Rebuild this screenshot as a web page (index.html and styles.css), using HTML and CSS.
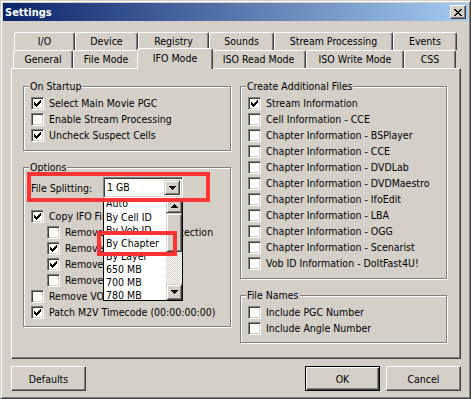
FILE: index.html
```html
<!DOCTYPE html>
<html>
<head>
<meta charset="utf-8">
<title>Settings</title>
<link rel="stylesheet" href="styles.css">
</head>
<body>
<div class="window">
  <div class="titlebar">
    <span class="title">Settings</span>
    <span class="close"><svg width="8" height="7" viewBox="0 0 8 7" shape-rendering="crispEdges"><path d="M0 0h2v1H0z M6 0h2v1H6z M1 1h2v1H1z M5 1h2v1H5z M2 2h4v1H2z M3 3h2v1H3z M2 4h4v1H2z M1 5h2v1H1z M5 5h2v1H5z M0 6h2v1H0z M6 6h2v1H6z" fill="#000"/></svg></span>
  </div>
  <div class="client">
    <div class="tabs">
      <div class="tabrow back">
        <div class="tab">I/O</div>
        <div class="tab">Device</div>
        <div class="tab">Registry</div>
        <div class="tab">Sounds</div>
        <div class="tab">Stream Processing</div>
        <div class="tab">Events</div>
      </div>
      <div class="tabrow front">
        <div class="tab">General</div>
        <div class="tab">File Mode</div>
        <div class="tab sel">IFO Mode</div>
        <div class="tab">ISO Read Mode</div>
        <div class="tab">ISO Write Mode</div>
        <div class="tab">CSS</div>
      </div>
    </div>
    <div class="panel">
      <div class="col">
        <div class="group">
          <span class="group-title">On Startup</span>
          <div class="cb-row"><span class="cb on"><svg width="7" height="7" viewBox="0 0 7 7" shape-rendering="crispEdges"><path d="M6 0h1v1H6z M5 1h2v1H5z M0 2h1v1H0z M4 2h3v1H4z M0 3h2v1H0z M3 3h3v1H3z M0 4h5v1H0z M1 5h3v1H1z M2 6h1v1H2z"/></svg></span><span>Select Main Movie PGC</span></div>
          <div class="cb-row"><span class="cb"></span><span>Enable Stream Processing</span></div>
          <div class="cb-row"><span class="cb on"><svg width="7" height="7" viewBox="0 0 7 7" shape-rendering="crispEdges"><path d="M6 0h1v1H6z M5 1h2v1H5z M0 2h1v1H0z M4 2h3v1H4z M0 3h2v1H0z M3 3h3v1H3z M0 4h5v1H0z M1 5h3v1H1z M2 6h1v1H2z"/></svg></span><span>Uncheck Suspect Cells</span></div>
        </div>
        <div class="group">
          <span class="group-title">Options</span>
          <div class="split-row">
            <span class="split-label">File Splitting:</span>
            <div class="combo">
              <span class="combo-text">1 GB</span>
              <span class="sbtn combo-btn"><svg width="7" height="4" viewBox="0 0 7 4" shape-rendering="crispEdges"><path d="M0 0h7v1H0z M1 1h5v1H1z M2 2h3v1H2z M3 3h1v1H3z"/></svg></span>
              <div class="droplist">
                <div class="items">
                  <div class="item auto"><span>Auto</span></div>
                  <div class="item">By Cell ID</div>
                  <div class="item">By Vob ID</div>
                  <div class="item current">By Chapter</div>
                  <div class="item">By Layer</div>
                  <div class="item">650 MB</div>
                  <div class="item">700 MB</div>
                  <div class="item">780 MB</div>
                </div>
                <div class="vscroll">
                  <span class="sbtn sb-up"><svg width="7" height="4" viewBox="0 0 7 4" shape-rendering="crispEdges"><path d="M3 0h1v1H3z M2 1h3v1H2z M1 2h5v1H1z M0 3h7v1H0z"/></svg></span>
                  <span class="sbtn sb-thumb"></span>
                  <span class="sb-track"></span>
                  <span class="sbtn sb-down"><svg width="7" height="4" viewBox="0 0 7 4" shape-rendering="crispEdges"><path d="M0 0h7v1H0z M1 1h5v1H1z M2 2h3v1H2z M3 3h1v1H3z"/></svg></span>
                </div>
              </div>
            </div>
          </div>
          <div class="cb-row"><span class="cb on"><svg width="7" height="7" viewBox="0 0 7 7" shape-rendering="crispEdges"><path d="M6 0h1v1H6z M5 1h2v1H5z M0 2h1v1H0z M4 2h3v1H4z M0 3h2v1H0z M3 3h3v1H3z M0 4h5v1H0z M1 5h3v1H1z M2 6h1v1H2z"/></svg></span><span>Copy IFO Files</span></div>
          <div class="cb-row sub"><span class="cb"></span><span>Remove Macrovision Protection</span></div>
          <div class="cb-row sub"><span class="cb on"><svg width="7" height="7" viewBox="0 0 7 7" shape-rendering="crispEdges"><path d="M6 0h1v1H6z M5 1h2v1H5z M0 2h1v1H0z M4 2h3v1H4z M0 3h2v1H0z M3 3h3v1H3z M0 4h5v1H0z M1 5h3v1H1z M2 6h1v1H2z"/></svg></span><span>Remove PUOs</span></div>
          <div class="cb-row sub"><span class="cb on"><svg width="7" height="7" viewBox="0 0 7 7" shape-rendering="crispEdges"><path d="M6 0h1v1H6z M5 1h2v1H5z M0 2h1v1H0z M4 2h3v1H4z M0 3h2v1H0z M3 3h3v1H3z M0 4h5v1H0z M1 5h3v1H1z M2 6h1v1H2z"/></svg></span><span>Remove Region Code</span></div>
          <div class="cb-row sub"><span class="cb"></span><span>Remove RCE Protection</span></div>
          <div class="cb-row"><span class="cb"></span><span>Remove VOB ID Info</span></div>
          <div class="cb-row"><span class="cb on"><svg width="7" height="7" viewBox="0 0 7 7" shape-rendering="crispEdges"><path d="M6 0h1v1H6z M5 1h2v1H5z M0 2h1v1H0z M4 2h3v1H4z M0 3h2v1H0z M3 3h3v1H3z M0 4h5v1H0z M1 5h3v1H1z M2 6h1v1H2z"/></svg></span><span>Patch M2V Timecode (00:00:00:00)</span></div>
        </div>
      </div>
      <div class="col">
        <div class="group">
          <span class="group-title">Create Additional Files</span>
          <div class="cb-row"><span class="cb on"><svg width="7" height="7" viewBox="0 0 7 7" shape-rendering="crispEdges"><path d="M6 0h1v1H6z M5 1h2v1H5z M0 2h1v1H0z M4 2h3v1H4z M0 3h2v1H0z M3 3h3v1H3z M0 4h5v1H0z M1 5h3v1H1z M2 6h1v1H2z"/></svg></span><span>Stream Information</span></div>
          <div class="cb-row"><span class="cb"></span><span>Cell Information - CCE</span></div>
          <div class="cb-row"><span class="cb"></span><span>Chapter Information - BSPlayer</span></div>
          <div class="cb-row"><span class="cb"></span><span>Chapter Information - CCE</span></div>
          <div class="cb-row"><span class="cb"></span><span>Chapter Information - DVDLab</span></div>
          <div class="cb-row"><span class="cb"></span><span>Chapter Information - DVDMaestro</span></div>
          <div class="cb-row"><span class="cb"></span><span>Chapter Information - IfoEdit</span></div>
          <div class="cb-row"><span class="cb"></span><span>Chapter Information - LBA</span></div>
          <div class="cb-row"><span class="cb"></span><span>Chapter Information - OGG</span></div>
          <div class="cb-row"><span class="cb"></span><span>Chapter Information - Scenarist</span></div>
          <div class="cb-row"><span class="cb"></span><span>Vob ID Information - DoItFast4U!</span></div>
        </div>
        <div class="group">
          <span class="group-title">File Names</span>
          <div class="cb-row"><span class="cb"></span><span>Include PGC Number</span></div>
          <div class="cb-row"><span class="cb"></span><span>Include Angle Number</span></div>
        </div>
      </div>
    </div>
    <div class="buttons">
      <button class="btn btn-defaults">Defaults</button>
      <button class="btn btn-default">OK</button>
      <button class="btn">Cancel</button>
    </div>
  </div>
  <div class="mark mark-split"></div>
  <div class="mark mark-chapter"></div>
</div>
</body>
</html>
```
FILE: styles.css
```css
* { box-sizing: border-box; }
html, body { margin: 0; padding: 0; }
body {
  background: #d4d0c8;
  font-family: "DejaVu Sans", "Liberation Sans", sans-serif;
  font-stretch: condensed;
  font-size: 10.5px;
  color: #000;
}
.window {
  position: relative;
  width: 471px;
  height: 399px;
  background: #d4d0c8;
  border: 1px solid;
  border-color: #d4d0c8 #404040 #404040 #d4d0c8;
  box-shadow: inset 1px 1px 0 #fff, inset -1px -1px 0 #808080;
  padding: 2px;
}
.titlebar {
  height: 18px;
  display: flex;
  align-items: center;
  justify-content: space-between;
  padding: 0 2px;
  background: linear-gradient(to right, #0a246a, #a6caf0);
}
.title {
  color: #fff;
  font-weight: bold;
  font-size: 11px;
  padding-left: 0;
}
.close {
  width: 16px;
  height: 14px;
  display: flex;
  align-items: center;
  justify-content: center;
  background: #d4d0c8;
  border: 1px solid;
  border-color: #fff #404040 #404040 #fff;
  box-shadow: inset -1px -1px 0 #808080;
}
.close svg { display: block; }
.client { padding: 11px 0 0 8px; }
.tabs { height: 36px; }
.tabrow { display: grid; height: 18px; }
.tabrow.back { grid-template-columns: 61px 63px 71px 65px 119px 64px; margin-left: 3px; }
.tabrow.front { grid-template-columns: 60px 66px 72px 95px 98px 52px; margin-left: 2px; }
.tab {
  background: #d4d0c8;
  border: 1px solid;
  border-bottom: 0;
  border-color: #fff #404040 #404040 #fff;
  border-radius: 3px 3px 0 0;
  box-shadow: inset -1px 0 0 #808080;
  text-align: center;
  line-height: 17px;
  white-space: nowrap;
}
.tab.sel {
  margin: -2px -2px -1px -2px;
  position: relative;
  z-index: 1;
  line-height: 18px;
}
.panel {
  width: 450px;
  height: 291px;
  border: 1px solid;
  border-color: #fff #404040 #404040 #fff;
  box-shadow: inset -1px -1px 0 #808080;
  padding: 17px 0 0 11px;
  display: grid;
  grid-template-columns: 208px 207px;
  column-gap: 9px;
  align-items: start;
}
.col { display: flex; flex-direction: column; gap: 16px; }
.group {
  position: relative;
  border: 1px solid #808080;
  box-shadow: 1px 1px 0 #fff, inset 1px 1px 0 #fff;
  padding: 8px 7px 7px 7px;
}
.col .group + .group { padding-bottom: 6px; }
.group-title {
  position: absolute;
  top: -7px;
  left: 5px;
  padding: 0 1px;
  line-height: 13px;
  background: #d4d0c8;
  white-space: nowrap;
}
.cb-row {
  display: flex;
  align-items: center;
  gap: 5px;
  height: 16px;
  white-space: nowrap;
}
.cb-row.sub { padding-left: 16px; }
.cb {
  flex: none;
  width: 13px;
  height: 13px;
  padding: 2px;
  background: #fff;
  border: 1px solid;
  border-color: #808080 #fff #fff #808080;
  box-shadow: inset 1px 1px 0 #404040, inset -1px -1px 0 #d4d0c8;
}
.cb svg { display: block; }
.split-row {
  display: flex;
  align-items: center;
  height: 21px;
  margin-top: 1px;
  margin-bottom: 10px;
}
.split-label { width: 72px; flex: none; }
.combo {
  position: relative;
  width: 80px;
  height: 21px;
  display: flex;
  align-items: stretch;
  padding: 2px;
  background: #fff;
  border: 1px solid;
  border-color: #808080 #fff #fff #808080;
  box-shadow: inset 1px 1px 0 #404040, inset -1px -1px 0 #d4d0c8;
}
.combo-text { flex: 1; padding-left: 1px; line-height: 15px; }
.sbtn {
  display: flex;
  align-items: center;
  justify-content: center;
  background: #d4d0c8;
  border: 1px solid;
  border-color: #d4d0c8 #404040 #404040 #d4d0c8;
  box-shadow: inset 1px 1px 0 #fff, inset -1px -1px 0 #808080;
}
.sbtn svg { display: block; }
.combo-btn { width: 16px; flex: none; }
.droplist {
  position: absolute;
  left: -1px;
  top: 20px;
  width: 80px;
  height: 103px;
  z-index: 5;
  display: flex;
  background: #fff;
  border: 1px solid #000;
  border-top: 0;
  overflow: hidden;
}
.items { flex: 1; min-width: 0; }
.item {
  height: 13px;
  line-height: 13px;
  padding-left: 2px;
  white-space: nowrap;
  overflow: hidden;
}
.item.auto span { position: relative; top: -1px; }
.item.current {
  height: 17px;
  line-height: 17px;
  margin: -2px 0;
  position: relative;
  z-index: 1;
  background: #fff;
}
.vscroll { width: 16px; flex: none; display: flex; flex-direction: column; }
.sb-up { height: 15px; flex: none; }
.sb-thumb { height: 39px; flex: none; }
.sb-track {
  flex: 1;
  background: repeating-conic-gradient(#fff 0 25%, #d4d0c8 0 50%) 0 0 / 2px 2px;
}
.sb-down { height: 16px; flex: none; }
.buttons {
  display: flex;
  width: 450px;
  gap: 6px;
  margin-top: 7px;
}
.btn {
  width: 75px;
  height: 25px;
  padding: 0;
  font: inherit;
  color: #000;
  background: #d4d0c8;
  border: 1px solid;
  border-color: #fff #404040 #404040 #fff;
  box-shadow: inset -1px -1px 0 #808080;
}
.btn-defaults { margin-right: auto; }
.btn-default {
  border-color: #000;
  box-shadow: inset 1px 1px 0 #fff, inset -1px -1px 0 #404040, inset -2px -2px 0 #808080;
}
.mark {
  position: absolute;
  border: 4px solid #f33;
  z-index: 10;
}
.mark-split { left: 26px; top: 171px; width: 183px; height: 30px; }
.mark-chapter { left: 96px; top: 230px; width: 80px; height: 25px; }
```
